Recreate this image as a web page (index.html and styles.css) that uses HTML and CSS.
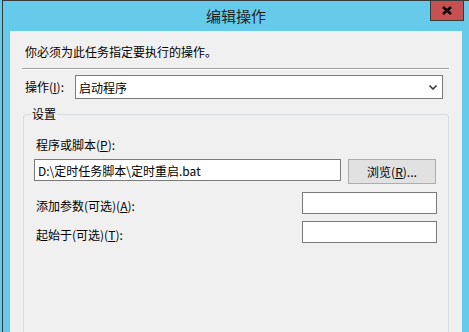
FILE: index.html
```html
<!DOCTYPE html>
<html lang="zh-CN">
<head>
    <meta charset="UTF-8">
    <title>编辑操作</title>
    <link rel="stylesheet" href="styles.css">
</head>
<body>
    <div class="window">
        <div class="titlebar">
            <span class="title">编辑操作</span>
            <button class="close">
                <svg width="10" height="9" viewBox="0 0 10 9">
                    <path d="M1 1 L9 8 M9 1 L1 8" stroke="#000" stroke-width="2.4" fill="none"/>
                </svg>
            </button>
        </div>

        <div class="client">
            <p class="intro">你必须为此任务指定要执行的操作。</p>
            <div class="sep"></div>

            <div class="action-row">
                <label class="action-label">操作(<u>I</u>):</label>
                <div class="combo">
                    <span>启动程序</span>
                    <svg class="arrow" width="8" height="5" viewBox="0 0 8 5">
                        <path d="M0.5 0.5 L4 4 L7.5 0.5" stroke="#404040" stroke-width="1.6" fill="none"/>
                    </svg>
                </div>
            </div>

            <fieldset class="group">
                <legend>设置</legend>
                <label class="field-label">程序或脚本(<u>P</u>):</label>
                <div class="path-row">
                    <input class="path" type="text" value="D:\定时任务脚本\定时重启.bat">
                    <button class="browse">浏览(<u>R</u>)...</button>
                </div>
                <div class="opt-row">
                    <label>添加参数(可选)(<u>A</u>):</label>
                    <input class="opt" type="text">
                </div>
                <div class="opt-row">
                    <label>起始于(可选)(<u>T</u>):</label>
                    <input class="opt" type="text">
                </div>
            </fieldset>
        </div>
    </div>
</body>
</html>
```

FILE: styles.css
```css
* {
    box-sizing: border-box;
}

body {
    margin: 0;
    height: 332px;
    overflow: hidden;
    background-color: #66cbea;
    font-family: "Noto Sans CJK SC", sans-serif;
    font-size: 12px;
    color: #000;
}

.window {
    margin-left: 2px;
    height: 332px;
    border-left: 1px solid #3a3a3a;
    border-top: 1px solid #3a3a3a;
}

.titlebar {
    position: relative;
    height: 30px;
    display: flex;
    align-items: center;
    justify-content: center;
}

.title {
    font-size: 15px;
    line-height: 20px;
    color: #1e1e1e;
}

.close {
    position: absolute;
    top: -1px;
    right: 5px;
    width: 34px;
    height: 21px;
    padding: 0;
    background-color: #c75050;
    border: 1px solid #3a3a3a;
    display: flex;
    align-items: center;
    justify-content: center;
}

.client {
    margin: 0 7px;
    height: 301px;
    padding-top: 13px;
    background-color: #f0f0f0;
    overflow: hidden;
}

.intro {
    margin: 0 0 0 15px;
    line-height: 16px;
}

.sep {
    margin: 8px 13px 0 12px;
    border-top: 1px solid #a0a0a0;
    border-bottom: 1px solid #fff;
}

.action-row {
    display: flex;
    align-items: center;
    margin-top: 5px;
    padding-left: 15px;
}

.action-label {
    width: 50px;
    line-height: 16px;
}

.combo {
    width: 368px;
    height: 24px;
    border: 1px solid #7a7a7a;
    background-color: #fff;
    display: flex;
    align-items: center;
    justify-content: space-between;
    padding: 0 5px 0 3px;
}

.group {
    margin: 7px 13px 0 13px;
    padding: 0 11px 0 10px;
    height: 240px;
    min-width: 0;
    border: 1px solid #d9dde0;
    border-radius: 3px;
}

.group legend {
    margin-left: -3px;
    padding: 0 1px;
    line-height: 16px;
}

.field-label {
    display: block;
    margin: 15px 0 0 2px;
    line-height: 16px;
}

.path-row {
    display: flex;
    align-items: flex-start;
    gap: 7px;
    margin-top: 6px;
}

.path,
.opt {
    height: 22px;
    border: 1px solid #7a7a7a;
    background-color: #fff;
    padding: 0 3px;
    font: inherit;
    color: #000;
    outline: none;
}

.path {
    width: 307px;
}

.browse {
    width: 88px;
    height: 25px;
    padding: 0;
    background-color: #e1e1e1;
    border: 1px solid #adadad;
    font: inherit;
    color: #000;
}

.opt-row {
    display: flex;
    align-items: flex-start;
    margin-top: 8px;
}

.opt-row + .opt-row {
    margin-top: 7px;
}

.opt-row label {
    flex: 1;
    margin-left: 2px;
    padding-top: 6px;
    line-height: 16px;
}

.opt {
    width: 135px;
}
```
